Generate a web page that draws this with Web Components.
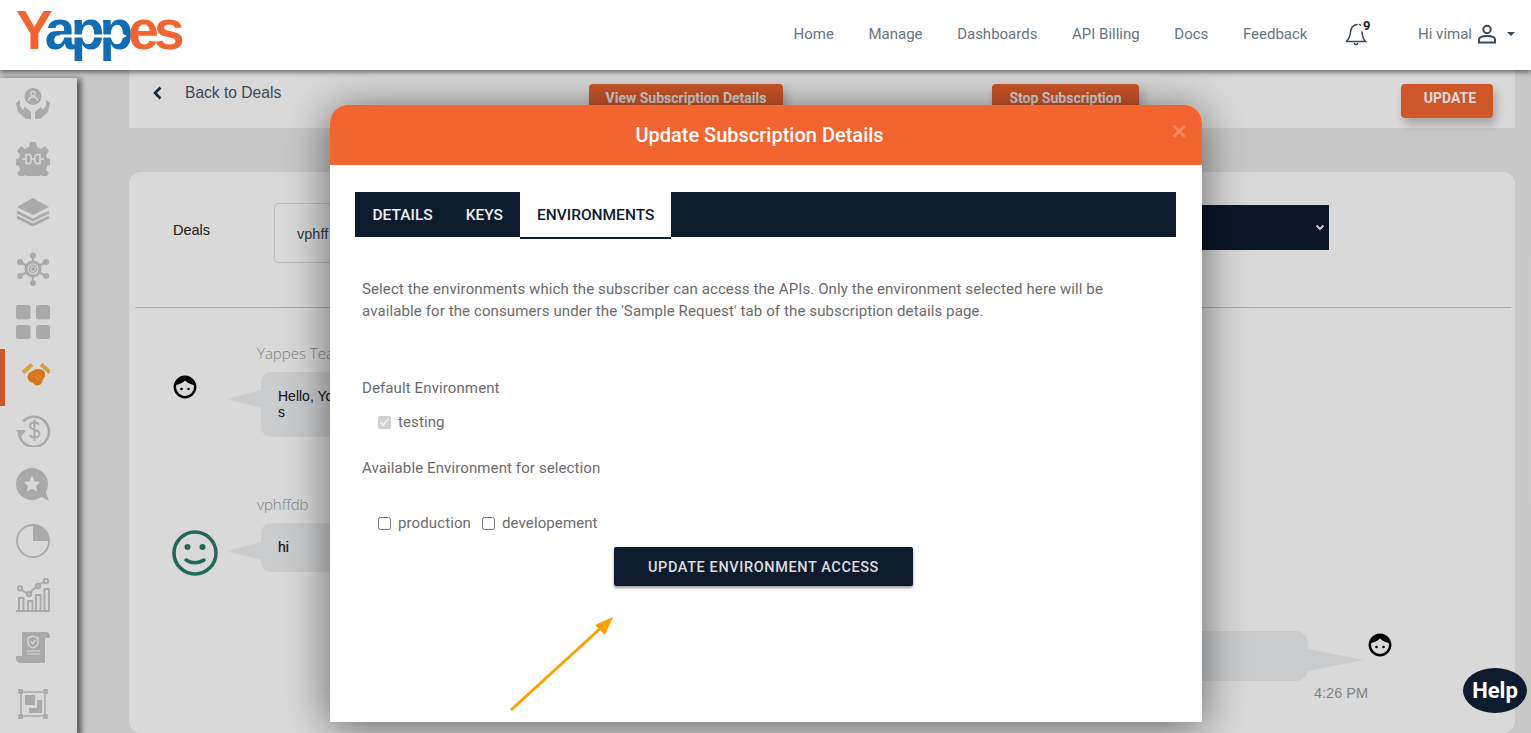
<!DOCTYPE html>
<html lang="en">
<head>
<meta charset="utf-8">
<title>Yappes</title>
<style>
  html, body { margin: 0; height: 733px; overflow: hidden; background: #ececec; font-family: Roboto, "Liberation Sans", sans-serif; }
  .page { display: flex; align-items: flex-start; height: 663px; }
  .content { flex: 1; padding: 0 16px 0 52px; display: flex; flex-direction: column; gap: 44px; min-width: 0; }
</style>
</head>
<body>
<yp-header></yp-header>
<div class="page">
  <yp-sidebar></yp-sidebar>
  <div class="content">
    <yp-topbar></yp-topbar>
    <yp-deal-panel></yp-deal-panel>
  </div>
</div>
<yp-backdrop>
  <yp-modal heading="Update Subscription Details">
    <yp-environments></yp-environments>
  </yp-modal>
</yp-backdrop>
<yp-help></yp-help>

<script>
const FACE = `<svg width="24" height="24" viewBox="0 0 24 24"><circle cx="12" cy="12" r="10.2" fill="#fff" stroke="#000" stroke-width="2.4"/><path d="M2.500 10C4 4 9 1.500 12 1.500S20 4 21.500 10C18 9.500 14.500 8 12 5.500 9.500 8 6 9.500 2.500 10Z" fill="#000"/><circle cx="8.500" cy="14" r="1.300" fill="#000"/><circle cx="15.500" cy="14" r="1.300" fill="#000"/></svg>`;

class YpHeader extends HTMLElement {
  connectedCallback() {
    this.attachShadow({ mode: 'open' });
    this.shadowRoot.innerHTML = `
      <style>
        :host { display: flex; align-items: center; height: 70px; background: #fff; position: relative; z-index: 20;
          box-shadow: 0 2px 5px rgba(0,0,0,.55); font-family: Roboto, sans-serif; }
        .logo { position: relative; margin-left: 16px; width: 167px; height: 70px; white-space: nowrap;
          font: 700 55px/60px "Liberation Sans", sans-serif; letter-spacing: -4.800px; color: #f26530; }
        .logo b { color: #0f6cb6; font-weight: 700; }
        .logo svg { position: absolute; left: 44px; top: 27px; }
        nav { margin-left: auto; display: flex; align-items: center; padding: 0 16px 2px 0; font-size: 15px; color: #66757f; }
        nav a { margin-right: 34.600px; white-space: nowrap; }
        .bell { position: relative; width: 24px; height: 26px; margin: 0 49px 0 3px; }
        .bell i { position: absolute; left: 18px; top: -3px; font: 700 13px Roboto, sans-serif; color: #1c1c1c; }
        .me { display: flex; align-items: center; white-space: nowrap; }
        .me svg { margin-left: 5px; }
        .caret { margin-left: 10px; width: 0; height: 0; border: 4px solid transparent; border-top: 4px solid #3b4856; border-bottom: 0; }
      </style>
      <div class="logo">Y<b>app</b>es<svg width="68" height="18" viewBox="0 0 68 18"><path d="M0 9H58" stroke="#fff" stroke-width="3"/><path d="M56 3.500L67 9 56 14.500Z" fill="#fff"/></svg></div>
      <nav>
        <a>Home</a><a>Manage</a><a>Dashboards</a><a>API Billing</a><a>Docs</a><a>Feedback</a>
        <span class="bell">
          <svg width="24" height="26" viewBox="0 0 24 26" fill="none" stroke="#3b4856" stroke-width="1.500" stroke-linecap="round"><path d="M1.500 20.500C4 18 5 16 5.500 11S8 4 12 3.500"/><path d="M1.500 20.500H20.500C18.500 18.500 17.500 16 17 11"/><path d="M9.500 22.500c.5 1.500 2.500 1.500 3 0"/><path d="M14.500 3.500l1 .7"/></svg>
          <i>9</i>
        </span>
        <span class="me">Hi vimal
          <svg width="20" height="20" viewBox="0 0 20 20" fill="none" stroke="#3b4856" stroke-width="2"><circle cx="10" cy="5.500" r="3.700"/><path d="M2 18.500V15.500C2 13.500 5 12 10 12S18 13.500 18 15.500V18.500Z"/></svg>
          <span class="caret"></span>
        </span>
      </nav>`;
  }
}

const SIDE_ICONS = [
  // people in hands
  `<circle cx="17" cy="8.500" r="8.500" fill="#c8c8c8"/><circle cx="17" cy="5.500" r="2.200" fill="none" stroke="#fff" stroke-width="1.200"/><path d="M12.500 13c0-3 2-4 4.500-4s4.500 1 4.500 4" fill="none" stroke="#fff" stroke-width="1.400"/><path d="M0 15l2 9 8 7h5v-7l-6-5-2 3-3-4V12ZM34 15l-2 9-8 7h-5v-7l6-5 2 3 3-4V12Z" fill="#c8c8c8"/>`,
  // gear with plug
  `<path d="M14 0h6l1 5 4 2 4-3 4 5-3 4 1 3 3 1v6l-3 1-1 4 3 3-4 5-4-3-4 2-1 4h-6l-1-4-4-2-4 3-4-5 3-3-1-4-3-1v-6l3-1 1-3-3-4 4-5 4 3 4-2Z" fill="#c8c8c8"/><path d="M6 17h4M28 17h-4M16 17h2" stroke="#fff" stroke-width="1.500"/><path d="M10 12.500h3c3 0 3 9 0 9h-3ZM24 12.500h-3c-3 0-3 9 0 9h3Z" fill="none" stroke="#fff" stroke-width="1.500"/>`,
  // layers
  `<path d="M17 4L33 13 17 21 1 13Z" fill="#c8c8c8"/><path d="M1 18l16 8 16-8M1 23l16 8 16-8" fill="none" stroke="#c8c8c8" stroke-width="2.600"/>`,
  // hub
  `<g stroke="#c8c8c8" stroke-width="2"><path d="M17 17V3M17 17V31M17 17L4 10M17 17L30 10M17 17L4 24M17 17L30 24"/></g><g fill="#c8c8c8"><circle cx="17" cy="3.500" r="3"/><circle cx="17" cy="31" r="3"/><circle cx="4" cy="10" r="3"/><circle cx="30" cy="10" r="3"/><circle cx="4" cy="24" r="3"/><circle cx="30" cy="24" r="3"/><circle cx="17" cy="17" r="8.500"/></g><circle cx="17" cy="17" r="5" fill="none" stroke="#fff" stroke-width="1.200"/><circle cx="17" cy="17" r="2.500" fill="none" stroke="#fff"/>`,
  // grid
  `<g fill="#c8c8c8"><rect x="0" y="0" width="14.500" height="14.500" rx="2.500"/><rect x="20" y="0" width="14" height="14.500" rx="2.500"/><rect x="0" y="20" width="14.500" height="14" rx="2.500"/><rect x="20" y="20" width="14" height="14" rx="2.500"/></g>`,
  // handshake
  `<path d="M7 16.500L16 8.500M25 8.500L34 16.500" stroke="#ffbc4b" stroke-width="4" fill="none"/><g fill="#ff8a25"><circle cx="17" cy="21" r="5.500"/><circle cx="23" cy="19" r="6"/><circle cx="21.500" cy="24.500" r="5"/><path d="M13 17l7-4 8 2 1 6-15 1Z"/></g><path d="M21 18l5 4M19 20l4 4" stroke="#ffbc4b" stroke-width="1" fill="none"/>`,
  // refund
  `<path d="M7 8.500A15 15 0 1 1 3 20" fill="none" stroke="#c8c8c8" stroke-width="2.600"/><path d="M0 17h10L5 24Z" fill="#c8c8c8"/><path d="M23 11.500c-1-1.500-2.500-2-4.500-2-3 0-4.500 1.500-4.500 3.500 0 5 9.500 2.500 9.500 8 0 2-2 3.500-4.800 3.500-2.200 0-4-.8-5-2.500M18.500 6.500V28" fill="none" stroke="#c8c8c8" stroke-width="2"/>`,
  // rating bubble
  `<circle cx="16" cy="16" r="16" fill="#c8c8c8"/><path d="M24 28l9 5-4-11Z" fill="#c8c8c8"/><path d="M16 8l2.500 5.200 5.700.7-4.200 4 1.100 5.600-5.100-2.800-5.100 2.800 1.100-5.600-4.200-4 5.700-.7Z" fill="#fff"/>`,
  // pie
  `<circle cx="17" cy="17" r="16" fill="none" stroke="#c8c8c8" stroke-width="1.800"/><path d="M17 17V1A16 16 0 0 1 33 17Z" fill="#c8c8c8"/>`,
  // chart
  `<g fill="none" stroke="#c8c8c8" stroke-width="2"><path d="M0 33H34"/><rect x="3" y="20" width="4.500" height="13"/><rect x="12" y="23" width="4.500" height="10"/><rect x="20" y="17" width="4.500" height="16"/><rect x="28.500" y="11" width="4.500" height="22"/><path d="M4 11l8 5 8-7 9-6"/><circle cx="4" cy="10.500" r="2.200"/><circle cx="13" cy="16" r="2.200"/><circle cx="22" cy="8" r="2.200"/><circle cx="30" cy="3" r="2.200"/></g>`,
  // certificate
  `<path d="M6 1h24c-1.500 2-1.500 4-1 6v25H10V25H6Z" fill="#c8c8c8"/><path d="M30 1c3 0 4 2 4 6h-5c-.5-2-.5-4 1-6ZM0 25h20v3c0 3 2 4 4 4H4c-3 0-4-3-4-5Z" fill="#c8c8c8"/><path d="M17 5l5 2v4c0 3-2 5-5 6-3-1-5-3-5-6V7Z" fill="none" stroke="#fff" stroke-width="1.300"/><path d="M14.500 10.500l2 2 3-3.500M11 20h13M11 23h13" fill="none" stroke="#fff" stroke-width="1.200"/>`,
  // arrange
  `<g fill="#c8c8c8"><rect x="2" y="2" width="5" height="5" rx="1"/><rect x="27" y="2" width="5" height="5" rx="1"/><rect x="2" y="27" width="5" height="5" rx="1"/><rect x="27" y="27" width="5" height="5" rx="1"/><rect x="9" y="8" width="10" height="10"/><path d="M21 13h5v13H13v-5h8Z"/></g><path d="M5 5H29V29H5Z" fill="none" stroke="#c8c8c8" stroke-width="1.500"/>`
];
// small upward nudges so each icon sits where the reference has it
const SIDE_NUDGE = [0, 2, 6, 0, 2, 8, 3, 2, 0, 0, 3, 0];

class YpSidebar extends HTMLElement {
  connectedCallback() {
    this.attachShadow({ mode: 'open' });
    const rows = SIDE_ICONS.map((icon, i) => `
      <div class="row ${i === 5 ? 'on' : ''}" style="padding-bottom:${SIDE_NUDGE[i]}px">
        <svg width="34" height="${i === 5 ? 26 : 34}" viewBox="0 ${i === 5 ? 4 : 0} 34 ${i === 5 ? 26 : 34}">${icon}</svg>
      </div>`).join('');
    this.shadowRoot.innerHTML = `
      <style>
        :host { display: block; flex: none; width: 77px; height: 655px; margin-top: 8px; background: #fff;
          box-shadow: 3px 2px 6px 1px rgba(0,0,0,.6); }
        .row { height: 54.450px; box-sizing: border-box; display: flex; align-items: center; justify-content: center; padding-right: 11px; position: relative; }
        .row.on::before { content: ''; position: absolute; left: 0; top: -1px; bottom: -1px; width: 5px; background: #f26530; }
      </style>
      ${rows}`;
  }
}

class YpTopbar extends HTMLElement {
  connectedCallback() {
    this.attachShadow({ mode: 'open' });
    this.shadowRoot.innerHTML = `
      <style>
        :host { display: flex; align-items: flex-start; height: 58px; box-sizing: border-box; padding: 14px 22px 0 23px; background: #fff; }
        .back { display: flex; align-items: center; width: 437px; height: 17px; font: 15.600px "Liberation Sans", sans-serif; color: #44586d; white-space: nowrap; }
        .back svg { margin-right: 22px; }
        button { height: 34px; border: 0; border-radius: 4px; background: #f26530; color: #fff; font: 700 14px Roboto, sans-serif;
          box-shadow: 3px 6px 10px rgba(0,0,0,.25); padding: 0; margin-top: 0; }
        button span { display: block; margin-top: -6px; }
        .view { width: 194px; }
        .stop { width: 147px; margin-left: 209px; }
        .upd { width: 92px; margin-left: 262px; padding-left: 6px; }
      </style>
      <div class="back"><svg width="11" height="14" viewBox="0 0 11 14"><path d="M8.500 1.500L3 7l5.500 5.500" fill="none" stroke="#17304d" stroke-width="2.600"/></svg>Back to Deals</div>
      <button class="view"><span>View Subscription Details</span></button>
      <button class="stop"><span>Stop Subscription</span></button>
      <button class="upd"><span>UPDATE</span></button>`;
  }
}

class YpChatMsg extends HTMLElement {
  connectedCallback() {
    this.attachShadow({ mode: 'open' });
    this.shadowRoot.innerHTML = `
      <style>
        :host { display: grid; grid-template-columns: 84px 1fr; margin-left: 44px; color: #111; font: 14px/16px "Liberation Sans", sans-serif; }
        .avatar { display: flex; align-items: flex-start; }
        .name { font: 300 15px/18px "Open Sans", sans-serif; color: #999; margin-bottom: 10px; }
        .bubble { position: relative; margin-left: 4px; width: 300px; background: #eef0f3; border-radius: 10px; box-sizing: border-box; padding: 16px 17px 17px; }
        .bubble::before { content: ''; position: absolute; left: -34px; border: 9px solid transparent; border-right: 34px solid #eef0f3; border-left: 0; top: var(--tail, 18px); }
      </style>
      <div class="avatar"><slot name="avatar"></slot></div>
      <div>
        <div class="name">${this.getAttribute('name')}</div>
        <div class="bubble"><slot></slot></div>
      </div>`;
  }
}

class YpDealPanel extends HTMLElement {
  connectedCallback() {
    this.attachShadow({ mode: 'open' });
    this.shadowRoot.innerHTML = `
      <style>
        :host { display: block; height: 561px; overflow: hidden; background: #fff; border-radius: 12px; font: 14.500px "Liberation Sans", sans-serif; }
        .form { display: flex; height: 135px; box-sizing: border-box; padding: 31px 0 0 44px; color: #222; }
        .lbl { width: 101px; padding-top: 19px; }
        .inp { width: 500px; height: 60px; box-sizing: border-box; border: 1px solid #ddd; border-radius: 4px; padding: 22px 22px 0; color: #444; }
        .sel { width: 200px; height: 45px; margin: 2px 0 0 355px; background: #0d1b2e; position: relative; }
        .sel svg { position: absolute; right: 4px; top: 19px; }
        hr { margin: 0 4px 0 6px; border: 0; border-top: 1px solid #ccc; }
        .one { margin-top: 36px; }
        .two { margin-top: 58px; --tail: 19px; }
        .face { margin-top: 31px; line-height: 0; }
        .smile { margin: 35px 0 0 -1px; }
        .mine { display: flex; justify-content: flex-end; margin: 55px 207px 0 0; }
        .b { position: relative; width: 300px; height: 50px; background: #eef0f3; border-radius: 12px; }
        .b::after { content: ''; position: absolute; left: 100%; top: 18px; border-left: 56px solid #eef0f3; border-top: 11px solid transparent; border-bottom: 11px solid transparent; }
        .side { width: 0; position: relative; }
        .side span { position: absolute; left: 60px; top: 2px; line-height: 0; }
        .time { font-size: 14.500px; color: #999; margin: 4px 147px 0 0; text-align: right; }
      </style>
      <div class="form">
        <div class="lbl">Deals</div>
        <div class="inp">vphff</div>
        <div class="sel"><svg width="10" height="7" viewBox="0 0 10 7"><path d="M1.500 1.500L5 5l3.500-3.500" fill="none" stroke="#eee" stroke-width="2"/></svg></div>
      </div>
      <hr>
      <yp-chat-msg class="one" name="Yappes Team"><span slot="avatar" class="face">${FACE}</span>Hello, Yo<br>s</yp-chat-msg>
      <yp-chat-msg class="two" name="vphffdb">
        <svg slot="avatar" class="smile" width="46" height="46" viewBox="0 0 46 46"><circle cx="23" cy="23" r="21" fill="none" stroke="#2a7a68" stroke-width="3.500"/><circle cx="15.500" cy="17" r="3" fill="#2a7a68"/><circle cx="30.500" cy="17" r="3" fill="#2a7a68"/><path d="M14 30c5 3.500 13 3.500 18 0" fill="none" stroke="#2a7a68" stroke-width="3.500" stroke-linecap="round"/></svg>
        <b style="font-weight:500;-webkit-text-stroke:.2px">hi</b>
      </yp-chat-msg>
      <div class="mine"><div class="b"></div><div class="side"><span>${FACE}</span></div></div>
      <div class="time">4:26 PM</div>`;
  }
}

class YpBackdrop extends HTMLElement {
  connectedCallback() {
    this.attachShadow({ mode: 'open' });
    this.shadowRoot.innerHTML = `
      <style>
        :host { display: block; position: absolute; left: 0; right: 0; top: 70px; height: 663px; background: rgba(0,0,0,.15); z-index: 10; overflow: hidden; }
      </style>
      <slot></slot>`;
  }
}

class YpModal extends HTMLElement {
  connectedCallback() {
    this.attachShadow({ mode: 'open' });
    this.shadowRoot.innerHTML = `
      <style>
        :host { display: block; position: absolute; left: 330px; top: 35px; width: 872px; height: 617px; background: #fff;
          border-radius: 18px 18px 0 0; box-shadow: 0 5px 45px rgba(0,0,0,.55); }
        header { height: 60px; background: #f26530; border-radius: 18px 18px 0 0; display: flex; align-items: center; justify-content: center;
          color: #fff; font: 500 20px Roboto, sans-serif; padding-right: 13px; position: relative; }
        header i { position: absolute; right: 15px; top: 11px; font: 700 26px "Liberation Sans", sans-serif; font-style: normal; color: #f58a60; }
      </style>
      <header>${this.getAttribute('heading')}<i>×</i></header>
      <slot></slot>`;
  }
}

class YpEnvironments extends HTMLElement {
  connectedCallback() {
    this.attachShadow({ mode: 'open' });
    this.shadowRoot.innerHTML = `
      <style>
        :host { display: block; padding: 27px 26px 0 25px; font: 15px/22px Roboto, sans-serif; letter-spacing: .11px; color: #6b6b6b; }
        .tabs { display: flex; height: 45px; background: #0d1b2e; padding-left: 1px; font: 500 15.500px/47px Roboto, sans-serif; letter-spacing: 0; color: #eee; }
        .tabs span { padding: 0 16.500px; }
        .tabs .on { background: #fff; color: #0d1b2e; height: 45px; margin-left: 1px; border-bottom: 2px solid #0d1b2e; }
        .body { padding-left: 7px; }
        p { margin: 41px 60px 0 0; }
        .lab { margin-top: 56px; line-height: 20px; }
        .chk { display: flex; align-items: center; height: 20px; padding-left: 16px; }
        .chk input { margin: 0 7px 0 0; width: 13px; height: 13px; }
        .chk label + input { margin-left: 11px; }
        button { display: block; width: 299px; height: 39px; margin: 14px 0 0 252px; padding: 2px 0 0; border: 0; border-radius: 2px; background: #0d1b2e; color: #ddd;
          font: 500 14.500px Roboto, sans-serif; letter-spacing: .6px; box-shadow: 0 2px 3px rgba(0,0,0,.4); }
        .arrow { position: absolute; left: 175px; top: 510px; }
      </style>
      <div class="tabs"><span>DETAILS</span><span>KEYS</span><span class="on">ENVIRONMENTS</span></div>
      <div class="body">
        <p>Select the environments which the subscriber can access the APIs. Only the environment selected here will be available for the consumers under the 'Sample Request' tab of the subscription details page.</p>
        <div class="lab">Default Environment</div>
        <div class="chk" style="margin-top:14px"><input type="checkbox" checked disabled><label>testing</label></div>
        <div class="lab" style="margin-top:26px">Available Environment for selection</div>
        <div class="chk" style="margin-top:35px"><input type="checkbox"><label>production</label><input type="checkbox"><label>developement</label></div>
        <button>UPDATE ENVIRONMENT ACCESS</button>
      </div>
      <svg class="arrow" width="110" height="100" viewBox="0 0 110 100"><path d="M6 95L98 11" stroke="#ffa000" stroke-width="3"/><path d="M108 2L90 10 100 20Z" fill="#ffa000"/></svg>`;
  }
}

class YpHelp extends HTMLElement {
  connectedCallback() {
    this.attachShadow({ mode: 'open' });
    this.shadowRoot.innerHTML = `
      <style>
        :host { display: flex; align-items: center; justify-content: center; position: absolute; left: 1463px; top: 668px; width: 64px; height: 45px;
          border-radius: 50%; background: #0d1b2e; color: #fff; font: 700 22px Roboto, sans-serif; z-index: 30; }
      </style>
      Help`;
  }
}

customElements.define('yp-header', YpHeader);
customElements.define('yp-sidebar', YpSidebar);
customElements.define('yp-topbar', YpTopbar);
customElements.define('yp-chat-msg', YpChatMsg);
customElements.define('yp-deal-panel', YpDealPanel);
customElements.define('yp-backdrop', YpBackdrop);
customElements.define('yp-modal', YpModal);
customElements.define('yp-environments', YpEnvironments);
customElements.define('yp-help', YpHelp);
</script>
</body>
</html>
